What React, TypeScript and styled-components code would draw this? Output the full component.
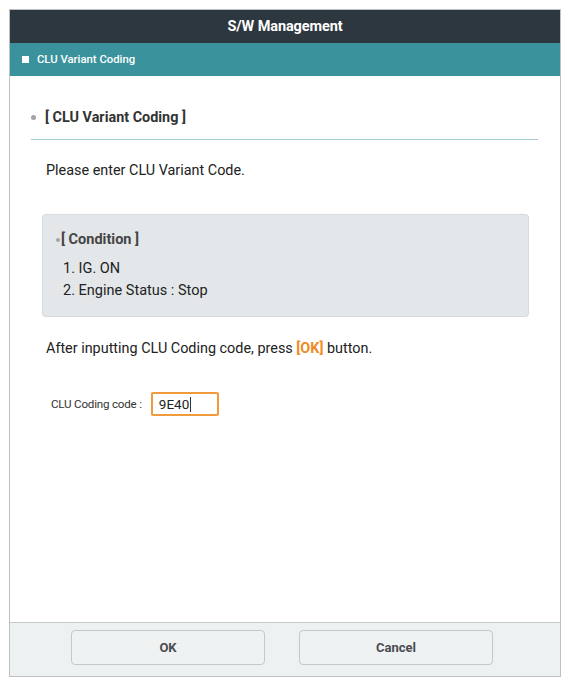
import React from "react";
import styled, { createGlobalStyle } from "styled-components";

const Global = createGlobalStyle`
  html, body { margin: 0; padding: 0; background: #ffffff; }
  body { font-family: Roboto, "Liberation Sans", Arial, sans-serif; }
  * { box-sizing: border-box; }
`;

const Page = styled.div`
  padding: 9px 0 0 9px;
  width: 570px;
  height: 685px;
`;

const Frame = styled.div`
  width: 552px;
  height: 668px;
  border: 1px solid #bdbfc1;
  display: flex;
  flex-direction: column;
  background: #ffffff;
`;

const TitleBar = styled.div`
  height: 33px;
  background: #2d3740;
  color: #ffffff;
  font-size: 14.5px;
  font-weight: 700;
  display: flex;
  align-items: center;
  justify-content: center;
  letter-spacing: -0.1px;
`;

const SubBar = styled.div`
  height: 33px;
  background: #3a929c;
  color: #ffffff;
  font-size: 11.3px;
  font-weight: 500;
  display: flex;
  align-items: center;
  gap: 8px;
  padding-left: 12px;
`;

const Square = styled.span`
  width: 7px;
  height: 7px;
  background: #ffffff;
  display: inline-block;
`;

const Content = styled.div`
  flex: 1;
  padding: 29px 21px 0 21px;
  color: #222;
`;

const SectionHead = styled.div`
  display: flex;
  align-items: center;
  gap: 9px;
  height: 24px;
  font-size: 14.4px;
  font-weight: 700;
  color: #333;
  margin-bottom: 10px;
`;

const Dot = styled.span<{ $size: number }>`
  width: ${(p) => p.$size}px;
  height: ${(p) => p.$size}px;
  border-radius: 50%;
  background: #a0a4a7;
  display: inline-block;
  flex: none;
`;

const Divider = styled.div`
  height: 1px;
  background: #9fcbd3;
  margin-right: 1px;
`;

const Text = styled.div<{ $top: number }>`
  margin-top: ${(p) => p.$top}px;
  padding-left: 15px;
  font-size: 14.4px;
  line-height: 20px;
  color: #222;
`;

const Highlight = styled.span`
  color: #f08a24;
  font-weight: 700;
`;

const ConditionBox = styled.div`
  margin: 33px 10px 0 11px;
  height: 103px;
  background: #e3e7e9;
  border: 1px solid #d7dbdd;
  border-radius: 4px;
  box-shadow: 0 0 1px rgba(0, 0, 0, 0.08);
  padding: 15px 0 0 13px;
`;

const ConditionHead = styled.div`
  display: flex;
  align-items: center;
  gap: 1px;
  font-size: 14.5px;
  font-weight: 700;
  line-height: 20px;
  color: #454545;
`;

const List = styled.div`
  margin-top: 8px;
  padding-left: 7px;
  font-size: 14.5px;
  line-height: 22px;
  color: #222;
`;

const FieldRow = styled.div`
  margin-top: 33px;
  padding-left: 20px;
  display: flex;
  align-items: center;
  gap: 9px;
`;

const FieldLabel = styled.span`
  font-size: 11.6px;
  color: #333;
  letter-spacing: -0.2px;
`;

const Field = styled.div`
  width: 68px;
  height: 24px;
  border: 2px solid #f29a3e;
  border-radius: 2px;
  display: flex;
  align-items: center;
  padding-left: 6px;
  font-size: 13.5px;
  color: #222;
  background: #fff;
`;

const Caret = styled.span`
  display: inline-block;
  width: 1px;
  height: 15px;
  background: #333;
  margin-left: 1px;
`;

const Footer = styled.div`
  height: 54px;
  border-top: 1px solid #c6c9cb;
  background: #edf1f1;
  display: flex;
  align-items: flex-start;
  padding: 7px 0 0 61px;
  gap: 34px;
`;

const Button = styled.button`
  width: 194px;
  height: 35px;
  border: 1.5px solid #c4c8ca;
  border-radius: 4px;
  background: #eef2f2;
  font-family: Roboto, "Liberation Sans", Arial, sans-serif;
  font-size: 13px;
  font-weight: 700;
  color: #4a4d50;
  cursor: pointer;
`;

export default function App() {
  return (
    <>
      <Global />
      <Page>
        <Frame>
          <TitleBar>S/W Management</TitleBar>
          <SubBar>
            <Square />
            CLU Variant Coding
          </SubBar>
          <Content>
            <SectionHead>
              <Dot $size={5} />[ CLU Variant Coding ]
            </SectionHead>
            <Divider />
            <Text $top={21}>Please enter CLU Variant Code.</Text>
            <ConditionBox>
              <ConditionHead>
                <Dot $size={4} />[ Condition ]
              </ConditionHead>
              <List>
                <div>1. IG. ON</div>
                <div>2. Engine Status : Stop</div>
              </List>
            </ConditionBox>
            <Text $top={22}>
              After inputting CLU Coding code, press <Highlight>[OK]</Highlight> button.
            </Text>
            <FieldRow>
              <FieldLabel>CLU Coding code :</FieldLabel>
              <Field>
                9E40
                <Caret />
              </Field>
            </FieldRow>
          </Content>
          <Footer>
            <Button>OK</Button>
            <Button>Cancel</Button>
          </Footer>
        </Frame>
      </Page>
    </>
  );
}
